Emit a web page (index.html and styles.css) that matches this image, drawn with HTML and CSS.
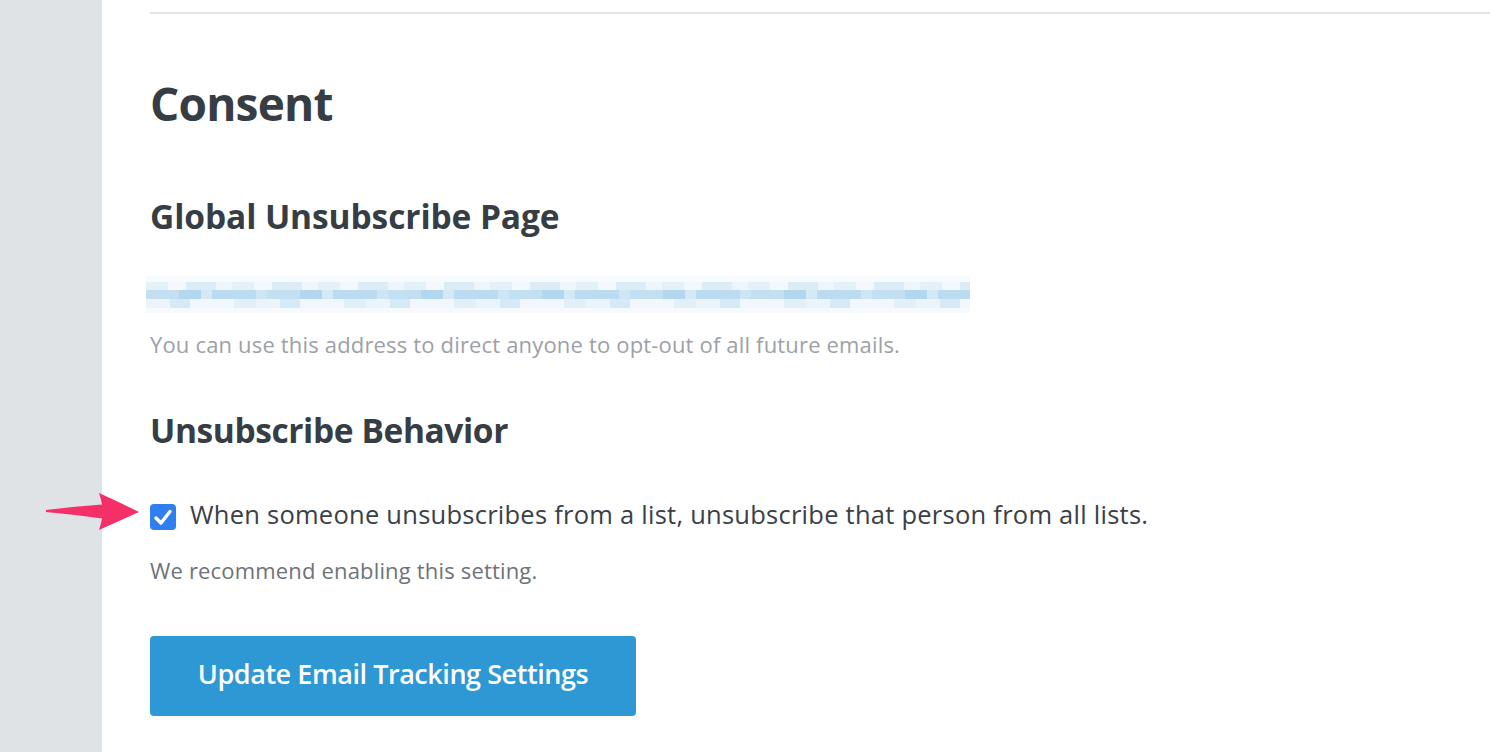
FILE: index.html
```html
<!DOCTYPE html>
<html>
<head>
<meta charset="utf-8">
<link rel="stylesheet" href="styles.css">
</head>
<body>
<div class="layout">
  <aside class="sidebar"></aside>
  <main class="main">
    <hr class="rule">
    <h1 class="title">Consent</h1>
    <section class="section">
      <h2 class="subtitle">Global Unsubscribe Page</h2>
      <div class="blurred" aria-hidden="true">
        <div class="brow r0"></div>
        <div class="brow r1"></div>
        <div class="brow r2"></div>
        <div class="brow r3"></div>
        <div class="brow r4"></div>
      </div>
      <p class="help light">You can use this address to direct anyone to opt-out of all future emails.</p>
    </section>
    <section class="section">
      <h2 class="subtitle sub2">Unsubscribe Behavior</h2>
      <label class="check-row">
        <svg class="arrow" width="100" height="44" viewBox="0 0 100 44">
          <path d="M2 20 Q30 16.5 58 14.5 Q57 9 55 3 Q75 12 95 22 Q75 31 55 40 Q57 34 58 28.5 Q30 24.5 2 22 Z" fill="#f52f68"/>
        </svg>
        <span class="checkbox">
          <svg width="26" height="26" viewBox="0 0 26 26"><path d="M6 14 L11 19 L20 7.5" fill="none" stroke="#fff" stroke-width="3.4" stroke-linecap="round" stroke-linejoin="round"/></svg>
        </span>
        <span class="check-text">When someone unsubscribes from a list, unsubscribe that person from all lists.</span>
      </label>
      <p class="help rec">We recommend enabling this setting.</p>
    </section>
    <button class="btn">Update Email Tracking Settings</button>
  </main>
</div>
</body>
</html>
```

FILE: styles.css
```css
html, body { margin: 0; padding: 0; background: #fff; }
body { font-family: "Open Sans", "Lato", sans-serif; color: #363d45; }
.layout { display: flex; min-height: 752px; }
.sidebar { width: 102px; flex: none; background: #dfe3e6; }
.main { flex: 1; padding: 0 0 0 48px; display: flex; flex-direction: column; align-items: flex-start; }
.rule { align-self: stretch; margin: 12px 0 0 0; border: none; border-top: 2px solid #e2e5e8; }
.title { margin: 0; padding-top: 61px; font-size: 46px; font-weight: 700; line-height: 56px; letter-spacing: -0.8px; }
.section { display: flex; flex-direction: column; align-items: flex-start; }
.subtitle { margin: 0; padding-top: 65px; font-size: 33.5px; font-weight: 700; line-height: 40px; letter-spacing: -0.1px; }
.sub2 { padding-top: 51px; letter-spacing: -0.4px; }
.blurred { margin: 40px 0 0 -4px; width: 824px; height: 37px; display: flex; flex-direction: column; }
.r0 { height: 6px; background: #f7fbfd; }
.r1 { height: 8px; background: repeating-linear-gradient(90deg, #e4f1f9 0 22px, #f3f8fc 22px 40px, #dcecf7 40px 70px, #eef6fb 70px 86px); }
.r2 { height: 9px; background: repeating-linear-gradient(90deg, #c3e0f2 0 33px, #b3d7ef 33px 55px, #d4e9f6 55px 66px, #bbdcf0 66px 110px, #cde5f4 110px 121px); }
.r3 { height: 9px; background: repeating-linear-gradient(90deg, #eaf4fa 0 24px, #d6e9f6 24px 44px, #f1f7fc 44px 88px, #e1eff8 88px 110px); }
.r4 { height: 5px; background: #f6fafd; }
.help { margin: 0; font-size: 22px; line-height: 30px; letter-spacing: 0.17px; color: #6d737a; }
.light { color: #9ca1a7; margin-top: 16px; }
.check-row { position: relative; display: flex; align-items: flex-start; gap: 14px; margin-top: 49px; }
.arrow { position: absolute; left: -106px; top: -9px; }
.checkbox { width: 26px; height: 26px; margin-top: 5px; border-radius: 4px; background: #2f7ff0; flex: none; display: flex; }
.check-text { font-size: 25.5px; line-height: 30px; letter-spacing: 0.25px; color: #3a4048; }
.rec { margin-top: 25px; }
.btn { margin-top: 51px; width: 486px; height: 80px; border: none; border-radius: 4px; background: #2e98d5; color: #fff; font-family: inherit; font-size: 27px; font-weight: 600; letter-spacing: -0.45px; cursor: pointer; padding: 0 0 5px 0; }
```
